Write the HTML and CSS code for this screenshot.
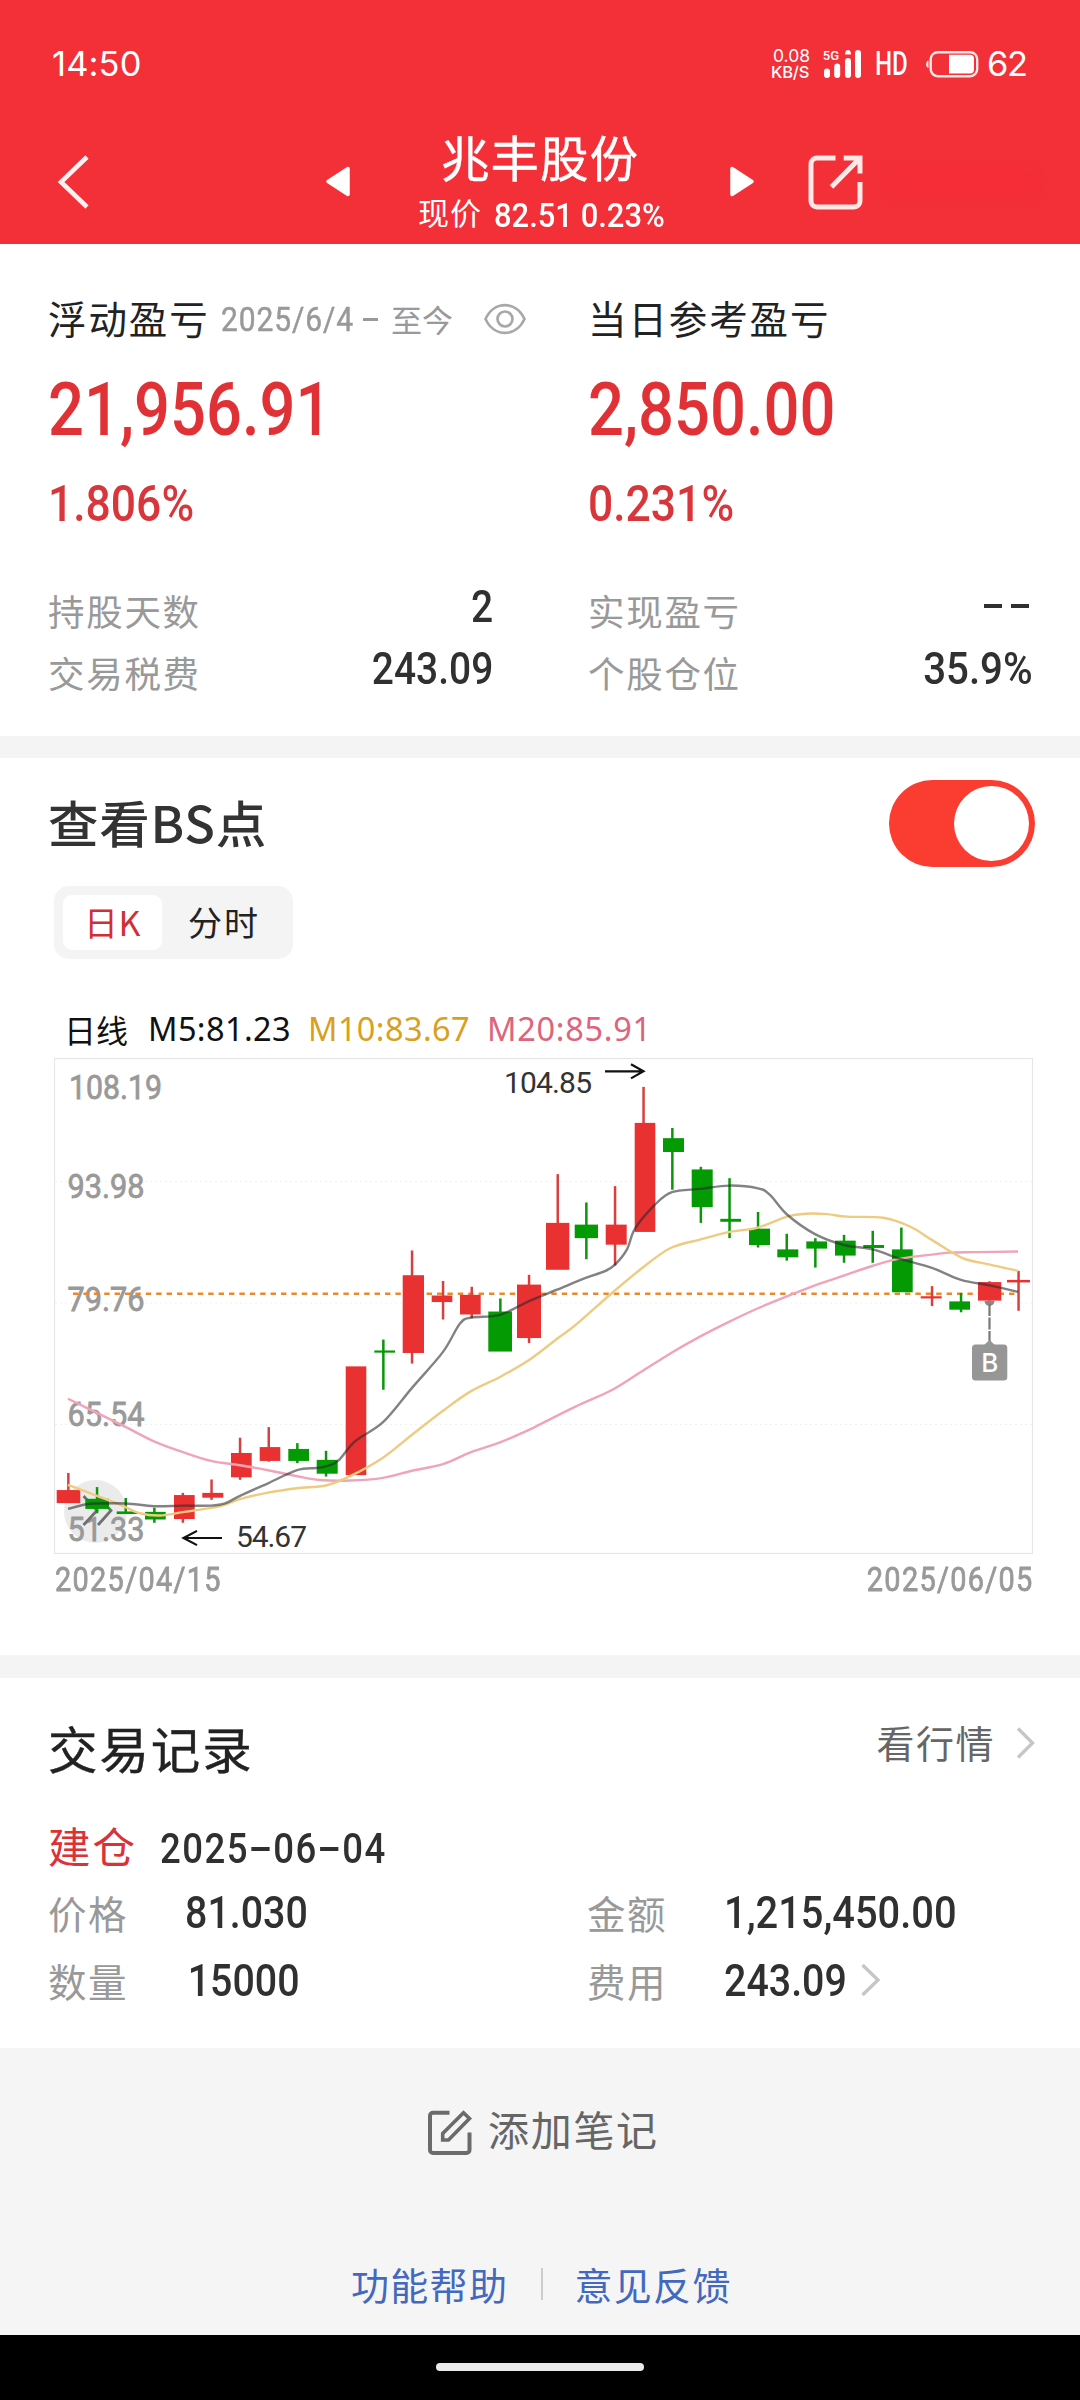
FILE: index.html
```html
<!DOCTYPE html>
<html lang="zh-CN">
<head>
<meta charset="utf-8">
<title>兆丰股份</title>
<link rel="stylesheet" href="styles.css">
</head>
<body>
<header class="top">
  <div class="status">
    <span class="clock">14:50</span>
    <div class="status-right">
      <div class="speed"><span>0.08</span><span class="unit">KB/S</span></div>
      <svg class="signal" width="40" height="30" viewBox="822 48 40 30">
        <text x="822.8" y="59" class="g5">5G</text>
        <g stroke="#fff" stroke-width="6" stroke-linecap="round"><path d="M827 70.5V74M837.2 65.500V74M848 60V74M858 52V74"/></g>
        <path d="M845 53.500a3 4.500 0 0 1 6 0z" fill="#fff"/>
      </svg>
      <span class="hd">HD</span>
      <svg class="battery" width="54" height="28" viewBox="925 49 54 28">
        <rect x="930.700" y="51.200" width="46.500" height="24" rx="7" fill="none" stroke="#ffe9e6" stroke-width="2.400"/>
        <path d="M928.500 59.500v7.500c-3.300-1-3.300-6.500 0-7.500z" fill="#ffe9e6"/>
        <path d="M949 53.800h21a4 4 0 0 1 4 4v10.800a4 4 0 0 1-4 4h-21z" fill="#fff"/>
      </svg>
      <span class="pct">62</span>
    </div>
  </div>
  <nav class="nav">
    <svg class="back" width="36" height="60" viewBox="56 152 36 60"><path d="M87 157 61 182l26 25" fill="none" stroke="#fff" stroke-opacity=".93" stroke-width="4.600"/></svg>
    <svg class="prev" width="26" height="32" viewBox="325 165 26 32"><path d="M348 168.500v26L328 181.500z" fill="#fff" stroke="#fff" stroke-width="3.500" stroke-linejoin="round"/></svg>
    <div class="title">
      <h1>兆丰股份</h1>
      <p><span>现价</span><b class="num">82.51 0.23%</b></p>
    </div>
    <svg class="next" width="26" height="32" viewBox="729 165 26 32"><path d="M732 168.500v26L752 181.500z" fill="#fff" stroke="#fff" stroke-width="3.500" stroke-linejoin="round"/></svg>
    <svg class="share" width="58" height="58" viewBox="807 153 58 58" fill="none" stroke="#ffe8e6" stroke-width="5">
      <path d="M835.500 158H817a6 6 0 0 0-6 6v37a6 6 0 0 0 6 6h37a6 6 0 0 0 6-6V182M843.700 158H860V173.500M860 158 831.500 187"/>
    </svg>
    <i class="smudge"></i>
  </nav>
</header>

<section class="summary">
  <div class="col">
    <div class="row-title"><h2>浮动盈亏</h2><span class="range"><b class="num">2025/6/4</b><i></i>至今</span>
      <svg class="eye" width="44" height="32" viewBox="483 303 44 32" fill="none" stroke="#a8a8a8" stroke-width="2.700"><path d="M485.500 319C494 300.500 516 300.500 524.500 319C516 337.500 494 337.500 485.500 319z"/><circle cx="505" cy="319" r="7.500"/></svg>
    </div>
    <div class="big"><b class="num">21,956.91</b></div>
    <div class="rate"><b class="num">1.806%</b></div>
    <dl><dt>持股天数</dt><dd class="num">2</dd></dl>
    <dl><dt>交易税费</dt><dd class="num">243.09</dd></dl>
  </div>
  <div class="col">
    <div class="row-title"><h2>当日参考盈亏</h2></div>
    <div class="big"><b class="num">2,850.00</b></div>
    <div class="rate"><b class="num">0.231%</b></div>
    <dl><dt>实现盈亏</dt><dd class="dashes"><i></i><i></i></dd></dl>
    <dl><dt>个股仓位</dt><dd class="num wide">35.9%</dd></dl>
  </div>
</section>

<section class="bs">
  <div class="bs-head"><h3>查看BS点</h3><div class="toggle"><i></i></div></div>
  <div class="tabs"><span class="on">日K</span><span>分时</span></div>
  <div class="legend"><span class="name">日线</span><span class="m5">M5:81.23</span><span class="m10">M10:83.67</span><span class="m20">M20:85.91</span></div>
  <svg class="chart" id="chart" width="980" height="500" viewBox="54 1056 980 500">
    <rect x="54.500" y="1058.500" width="978" height="495" fill="none" stroke="#e6e6e6" stroke-width="1.200"/>
    <path d="M55 1181.500H1032M55 1303H1032M55 1424.500H1032" stroke="#f0f0f0" stroke-dasharray="2 3" fill="none"/>
    <circle cx="95.500" cy="1511.500" r="31.500" fill="#ebebeb"/>
    <g class="axis">
      <text x="69" y="1099" textLength="93" lengthAdjust="spacingAndGlyphs">108.19</text><text x="67.500" y="1198" textLength="77" lengthAdjust="spacingAndGlyphs">93.98</text><text x="67.500" y="1311" textLength="77" lengthAdjust="spacingAndGlyphs">79.76</text><text x="67.500" y="1425.700" textLength="77" lengthAdjust="spacingAndGlyphs">65.54</text><text x="67.500" y="1541" textLength="77" lengthAdjust="spacingAndGlyphs">51.33</text>
    </g>
    <path d="M83.500 1496 97 1510.500 83.500 1525M97.500 1496 111 1510.500 98 1525" fill="none" stroke="#707070" stroke-width="2.800"/>
    <path d="M73 1293.700H1017" stroke="#ea8a2a" stroke-width="2.500" stroke-dasharray="5.400 5"/>
    <g id="candles"></g>
    <g id="averages" fill="none" stroke-width="2.400"></g>
    <g fill="none" stroke="#111" stroke-width="2.200"><path d="M605 1071.300H643M631 1064.200 643.500 1071.300 631 1078.400M222 1538H184M197 1530.900 183.500 1538 197 1545.100"/></g>
    <g class="note"><text x="504" y="1093" textLength="88">104.85</text><text x="236" y="1546.500" textLength="71">54.67</text></g>
    <path d="M984.500 1301a5 5 0 0 0 10 0z" fill="#888"/>
    <path d="M989.500 1304V1342" stroke="#777" stroke-width="2.200" stroke-dasharray="12 1.500"/>
    <path d="M983 1346l6.500-6 6.500 6z" fill="#969696"/>
    <rect x="972" y="1344.600" width="35.300" height="35.800" rx="3.500" fill="#969696"/>
    <text x="989.700" y="1372" class="buy">B</text>
  </svg>
  <div class="dates"><b class="num">2025/04/15</b><b class="num">2025/06/05</b></div>
</section>

<section class="records">
  <div class="rec-head"><h3>交易记录</h3><a>看行情<svg width="22" height="34" viewBox="1014 1729 22 34"><path d="M1018 1731.500 1032.500 1746 1018 1760.500" fill="none" stroke="#c6c6c6" stroke-width="3.400"/></svg></a></div>
  <div class="open"><span>建仓</span><b class="num">2025<i></i>06<i></i>04</b></div>
  <div class="grid">
    <div class="cell"><span>价格</span><b class="num">81.030</b></div>
    <div class="cell"><span>金额</span><b class="num amount">1,215,450.00</b></div>
    <div class="cell"><span>数量</span><b class="num qty">15000</b></div>
    <div class="cell"><span>费用</span><b class="num fee">243.09</b><svg width="22" height="34" viewBox="859 1964 22 34"><path d="M862.500 1966 878 1981 862.500 1996" fill="none" stroke="#c6c6c6" stroke-width="3.400"/></svg></div>
  </div>
</section>

<footer class="foot">
  <div class="add">
    <svg width="46" height="46" viewBox="427 2110 46 46" fill="none" stroke="#6b6b6b" stroke-width="4"><path d="M449.500 2112.700H433a3 3 0 0 0-3 3V2150a3 3 0 0 0 3 3H466.500a3 3 0 0 0 3-3V2132.500"/><path d="M442.700 2140V2133.500L463.500 2112.700 469.500 2118.500 448.500 2140z" stroke-width="3.600"/></svg>
    <span>添加笔记</span>
  </div>
  <div class="links"><a>功能帮助</a><i></i><a>意见反馈</a></div>
</footer>
<div class="home"><i></i></div>
<script src="chart.js"></script>
</body>
</html>
```
FILE: styles.css
```css
* { box-sizing: border-box; margin: 0; padding: 0; }
body {
  width: 1080px; height: 2400px; overflow: hidden;
  display: flex; flex-direction: column;
  background: #fff; color: #222;
  font-family: "Noto Sans CJK SC", sans-serif;
  font-weight: 400;
}
i { font-style: normal; display: block; }
h1, h2, h3 { font-weight: 400; }
.num {
  display: inline-block; font-family: Roboto, sans-serif; font-weight: 500;
  transform: scaleX(.87); transform-origin: 0 50%; white-space: nowrap;
}

.top { height: 243.500px; background: #f32f38; color: #fff; }
.status { height: 127px; padding: 0 0 0 52px; display: flex; justify-content: space-between; align-items: center; }
.clock { font-family: Inter, sans-serif; font-size: 34.500px; letter-spacing: .1px; }
.status-right { display: flex; align-items: center; width: 309px; }
.speed { width: 51px; display: flex; flex-direction: column; font-family: Inter, sans-serif; font-size: 17.500px; line-height: 16px; white-space: nowrap; padding-left: 2px; }
.speed .unit { font-size: 16.500px; font-weight: 500; margin-left: -2px; letter-spacing: -.2px; }
.g5 { font: 500 13px Roboto, sans-serif; fill: #fff; }
.hd { width: 50px; margin-left: 13px; font-family: Roboto, sans-serif; font-weight: 500; font-size: 33px; transform: scaleX(.73); transform-origin: 0 50%; }
.pct { margin-left: 8px; font-family: Inter, sans-serif; font-size: 34.500px; font-weight: 400; letter-spacing: -1.500px; }
.nav { height: 116px; padding-left: 56px; display: flex; align-items: flex-start; }
.back { margin-top: 25px; }
.prev { margin: 38px 0 0 233px; }
.title { width: 378px; text-align: center; }
.title h1 { font-size: 48.500px; letter-spacing: 1px; line-height: 60px; margin-top: -1px; -webkit-text-stroke: .4px #fff; }
.title p { display: flex; line-height: 40px; font-size: 31px; padding-left: 67px; margin-top: 6px; }
.title p span { letter-spacing: 1px; width: 75.500px; text-align: left; }
.title p .num { font-size: 34px; transform: scaleX(.91); padding-top: 2.500px; }
.next { margin-top: 38px; }
.share { margin: 26px 0 0 52px; }
.smudge { width: 150px; height: 30px; margin: 40px 0 0 22px; background: #fb2a33; opacity: .3; filter: blur(6px); }

.summary { height: 492.500px; padding: 43.500px 48px 0; display: grid; grid-template-columns: 444px 444px; column-gap: 96px; }
.row-title { height: 60px; display: flex; align-items: center; white-space: nowrap; }
.row-title h2 { width: 172px; flex: none; font-size: 38.500px; letter-spacing: 1.900px; line-height: 60px; }
.range { width: 263px; flex: none; display: flex; align-items: center; color: #999; font-size: 31px; line-height: 60px; padding-top: 4px; }
.range .num { width: 144px; font-size: 33.500px; font-weight: 400; -webkit-text-stroke: .5px #999; letter-spacing: 1px; padding: 2px 0 0 1px; transform: scaleX(.895); }
.range i { width: 15px; height: 3.500px; background: #999; margin: 1px 13px 0 -1px; }
.eye { flex: none; margin: 3px 0 0 0; }
.big { height: 120px; line-height: 111px; font-size: 74px; color: #e03236; }
.big .num { transform: scaleX(.855); }
.rate { height: 112px; line-height: 65px; font-size: 50.500px; color: #d8363b; }
.rate .num { transform: scaleX(.88); }
dl { height: 62px; display: flex; justify-content: space-between; }
dt { font-size: 36.500px; line-height: 64px; letter-spacing: 1.700px; color: #999; }
dd { font-size: 44px; line-height: 56px; color: #303030; }
dd.num { transform-origin: 100% 50%; transform: scaleX(.885); margin-right: -1px; }
dd.wide { transform: scaleX(.915); }
.dashes { display: flex; gap: 8.500px; padding: 25px 3px 0 0; }
.dashes i { width: 18.500px; height: 3.700px; background: #303030; }

.bs { height: 919px; border-top: 22.500px solid #f4f4f4; padding: 0 48px; }
.bs-head { height: 127.500px; display: flex; justify-content: space-between; padding-top: 21.500px; }
.bs-head h3 { font-size: 50.500px; font-weight: 500; line-height: 82px; letter-spacing: .8px; color: #333; }
.toggle { width: 146px; height: 87px; margin-right: -3px; border-radius: 44px; background: #fa3c31; padding: 6px; display: flex; justify-content: flex-end; }
.toggle i { width: 75px; height: 75px; border-radius: 50%; background: #fff; }
.tabs { margin-left: 6px; width: 239px; height: 73px; padding: 9px; border-radius: 15px; background: #f4f4f4; display: flex; font-size: 34px; line-height: 54px; }
.tabs span { padding-left: 26px; letter-spacing: 2px; }
.tabs .on { width: 99px; height: 55px; padding-left: 21px; border-radius: 9px; background: #fff; color: #d22f34; letter-spacing: .5px; }
.legend { height: 97px; padding: 45px 0 0 16px; display: flex; font-family: "Noto Sans", sans-serif; font-size: 32.500px; letter-spacing: .4px; line-height: 50px; color: #111; white-space: nowrap; }
.legend .name { width: 84px; font-family: "Noto Sans CJK SC", sans-serif; font-size: 32px; letter-spacing: 0; }
.legend .m5 { width: 160px; }
.legend .m10 { width: 179px; color: #d9a01e; }
.legend .m20 { color: #de647c; letter-spacing: .7px; }
.chart { display: block; margin-left: 6px; }
.axis { font: 400 33px Roboto, sans-serif; fill: #999; stroke: #999; stroke-width: .8px; }
.note { font: 400 30px Roboto, sans-serif; fill: #333; }
.buy { font: 500 26px Inter, sans-serif; fill: #fff; text-anchor: middle; }
.dates { height: 46px; margin: 0 0 0 7px; display: flex; justify-content: space-between; font-size: 33px; line-height: 48px; color: #999; }
.dates .num { font-weight: 400; letter-spacing: 1.500px; transform: scaleX(.875); -webkit-text-stroke: .8px #999; }
.dates .num + .num { transform-origin: 100% 50%; margin-right: -2px; }

.records { height: 393px; border-top: 23px solid #f4f4f4; padding: 0 48px; }
.rec-head { height: 126px; padding-top: 29px; display: flex; justify-content: space-between; white-space: nowrap; }
.rec-head h3 { font-size: 49.500px; line-height: 81px; letter-spacing: 1.900px; color: #222; -webkit-text-stroke: .4px #222; }
.rec-head a { display: flex; align-items: center; height: 68px; font-size: 38px; letter-spacing: 1.500px; color: #666; margin-right: -4px; }
.rec-head svg { margin: 4px 0 0 19px; }
.open { height: 82px; display: flex; align-items: center; color: #db3237; font-size: 42.500px; letter-spacing: 2px; }
.open span { width: 112px; line-height: 82px; }
.open .num { display: inline-flex; align-items: center; color: #303030; font-size: 42px; letter-spacing: 1.700px; padding-top: 6px; }
.open .num i { width: 21px; height: 4px; background: #303030; margin: 2px 4px 0 3px; }
.grid { display: grid; grid-template-columns: 539px 444px; grid-auto-rows: 68px; margin-top: -8px; }
.cell { display: flex; align-items: center; font-size: 38.500px; color: #999; }
.cell span { width: 137px; letter-spacing: 1.500px; line-height: 68px; }
.cell .num { color: #303030; font-size: 44px; line-height: 66px; width: 140px; padding-top: 2px; transform: scaleX(.895); }
.cell .qty { padding-left: 3px; }
.cell .amount { width: auto; transform: scaleX(.905); }
.cell .fee { width: 135px; }

.foot { height: 287px; background: #f5f5f5; }
.add { height: 160px; padding: 0 0 0 427px; display: flex; align-items: center; font-size: 41px; letter-spacing: 1.700px; color: #666; }
.add svg { margin-top: 10px; }
.add span { margin: 0 0 4px 15px; padding-top: 4px; }
.links { height: 60px; margin-top: 41px; padding-left: 351px; display: flex; align-items: center; font-size: 38px; letter-spacing: 1.300px; color: #4268bf; line-height: 60px; }
.links a { width: 190px; margin-top: 10px; }
.links i { width: 1.500px; height: 32px; background: #ccc; margin: 9px 32px 0 0; }
.home { height: 65px; background: #000; padding-top: 28px; }
.home i { width: 208px; height: 8px; margin: 0 auto; border-radius: 4px; background: #ece9ea; }
```
FILE: chart.js
```js
const toY = level => 1040 + (level - 1040) * 1.0905;

// [body left, width, body top, body bottom, wick x, wick top, wick bottom, rising]
const candles = [
  [56.7, 23.6, 1452.7, 1464.7, 68.3, 1437, 1464, 1],
  [85.3, 23.7, 1460.7, 1470, 97, 1450, 1474, 0],
  [116.7, 20.6, 1472.3, 1474.7, 125.7, 1460, 1474, 0],
  [145, 20.7, 1472.7, 1479.7, 154.3, 1469, 1482.7, 0],
  [174, 20.7, 1457.3, 1479.3, 182.8, 1455.3, 1482.7, 1],
  [202.3, 21, 1455.3, 1459.7, 211.5, 1443, 1461.7, 1],
  [231, 20.7, 1418.7, 1441, 240, 1404.7, 1443.3, 1],
  [259.7, 20.6, 1413.3, 1426, 268.7, 1395, 1426.7, 1],
  [288.3, 20.7, 1415, 1426, 297.3, 1409.7, 1428, 0],
  [316.7, 21, 1425, 1437.7, 326, 1416.7, 1440.3, 0],
  [345.7, 20.6, 1339.3, 1439, 355, 1340, 1438, 1],
  [374.3, 20.7, 1324.7, 1326.7, 383.3, 1314.7, 1360.7, 0],
  [402.7, 21.3, 1255.7, 1327, 412, 1233, 1336.7, 1],
  [431.7, 20.6, 1274.3, 1280.3, 443, 1261, 1296.3, 1],
  [460, 20.7, 1273.7, 1291.7, 471.7, 1266.3, 1295, 1],
  [488.3, 23.7, 1289, 1325.7, 500.3, 1277, 1325, 0],
  [517, 24, 1264.3, 1313.3, 529, 1255.3, 1318, 1],
  [546, 23.3, 1207.7, 1250.7, 557.7, 1163, 1250, 1],
  [574.7, 23.3, 1209.3, 1221.7, 586.3, 1189, 1241, 0],
  [605.7, 21, 1209.3, 1227.7, 615, 1174, 1246.7, 1],
  [634.7, 20.6, 1116, 1216, 643.5, 1083, 1215, 1],
  [663, 21, 1130, 1142.7, 672.3, 1120.7, 1177.3, 0],
  [691.7, 21, 1158.7, 1193.3, 700.8, 1156.3, 1207.7, 0],
  [720.3, 20.7, 1204, 1206.7, 729.5, 1166.7, 1221.7, 0],
  [749, 21, 1213, 1228, 758, 1197.7, 1230.3, 0],
  [777.3, 21, 1232, 1239.3, 786.7, 1217.7, 1242.3, 0],
  [806.3, 20.7, 1224.7, 1231.3, 815.3, 1221.7, 1248.7, 0],
  [835, 20.7, 1224, 1237.7, 844, 1218.7, 1244.3, 0],
  [863.3, 20.7, 1228, 1230.7, 872.7, 1215, 1244.3, 0],
  [892, 20.7, 1232, 1271.3, 901.3, 1212, 1271, 0],
  [920.7, 21, 1275, 1277, 932, 1265.7, 1284, 1],
  [949.3, 20.7, 1279.7, 1287.3, 961, 1272, 1289.7, 0],
  [978, 23.3, 1262, 1279, 989.5, 1261.3, 1279, 1],
  [1007, 23, 1260, 1262.3, 1018.5, 1251.7, 1288.3, 1]
];
const averages = [
  ["#f0a4b8", [68,1369,97,1382,126,1395,154,1408,183,1418,211,1426,240,1430,268,1434.5,297,1440,320,1443.5,350,1444,383,1441.5,412,1435,443,1429,471,1418,500,1409,529,1397.5,540,1392.5,576,1376,612,1361,640,1345,672,1326.5,700,1312,729,1298.5,758,1286,790,1274,815,1265,844,1256,873,1247,897,1241,925,1237.5,950,1235,975,1234.5,1018,1234]],
  ["#eecb80", [68,1448,97,1458,120,1466,140,1474,160,1476,183,1473,220,1467.5,240,1461,268,1455,297,1451,326,1448.5,350,1440,383,1423,412,1402,443,1380,471,1362,500,1349,529,1333.5,557,1314,576,1301,612,1272,640,1250.7,670,1231,700,1223,730,1216,758,1212,787,1202,807,1199.3,827,1199.7,847,1202,883,1203,910,1211,933,1224,962,1239.7,990,1246,1018,1251.7]],
  ["rgba(40,40,45,.58)", [68,1470,85,1466,97,1465,126,1465,154,1467.5,183,1467,211,1467,225,1465,240,1458,268,1446.5,297,1434.5,316,1432.5,326,1431,338,1426,355,1408,383,1390.5,412,1359,443,1326,460,1300,471.7,1294.5,500,1292,529,1279.5,557,1269,586.3,1258,605,1252,615,1246,627,1232,635,1213,655,1191,672,1179.5,700.7,1176.5,729,1173.5,758,1176,770,1182,787,1200,815,1218,844,1228,872.7,1232,901,1241,932,1249,961,1260,990,1265,1018,1271]]
];
const draw = (parent, tag, attrs) => {
  const node = document.createElementNS("http://www.w3.org/2000/svg", tag);
  for (const key in attrs) node.setAttribute(key, attrs[key]);
  parent.appendChild(node);
};
const candleLayer = document.getElementById("candles");
for (const [x, width, top, bottom, wx, high, low, up] of candles) {
  draw(candleLayer, "rect", { x: wx - 1.2, y: toY(high), width: 2.5, height: toY(low) - toY(high), fill: up ? "#d8403f" : "#0b960b" });
  draw(candleLayer, "rect", { x, y: toY(top), width, height: toY(bottom) - toY(top), fill: up ? "#ea3132" : "#049a04" });
}
// Catmull-Rom spline through the average points
const averageLayer = document.getElementById("averages");
for (const [stroke, v] of averages) {
  const p = [];
  for (let i = 0; i < v.length; i += 2) p.push([v[i], toY(v[i + 1])]);
  let d = `M${p[0]}`;
  for (let i = 0; i < p.length - 1; i++) {
    const a = p[i - 1] || p[i], b = p[i], c = p[i + 1], e = p[i + 2] || c;
    d += `C${b[0] + (c[0] - a[0]) / 6},${b[1] + (c[1] - a[1]) / 6} ${c[0] - (e[0] - b[0]) / 6},${c[1] - (e[1] - b[1]) / 6} ${c}`;
  }
  draw(averageLayer, "path", { d, stroke });
}
```
